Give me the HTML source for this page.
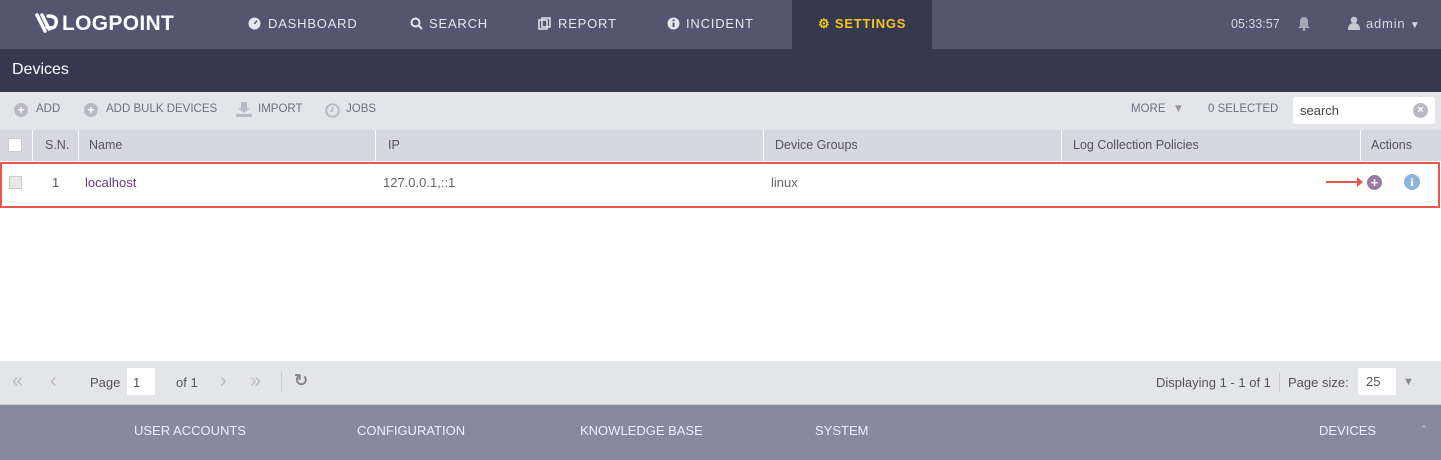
<!DOCTYPE html><html><head><style>
*{margin:0;padding:0;box-sizing:border-box}
body{width:1441px;height:460px;overflow:hidden;background:#fff;font-family:"Liberation Sans",sans-serif;position:relative}
.a{position:absolute}
.nav{left:0;top:0;width:1441px;height:49px;background:#54566f}
.nt{color:#e6e6ee;font-size:13px;letter-spacing:.8px;top:16px}
.tb{color:#6e7080;font-size:11.5px;top:103px}
.hd{color:#555;font-size:12.5px;top:138px}
.ic{border-radius:50%;background:#b8b9c2;color:#fff;font-size:12px;font-weight:bold;text-align:center;line-height:14px}
svg{position:absolute}
</style></head><body>
<div class="a nav"></div>
<div class="a" style="left:1182px;top:49px;width:259px;height:3px;background:#54566f"></div>
<div class="a" style="left:792px;top:0;width:140px;height:49px;background:#353950"></div>
<svg style="left:34px;top:12px" width="26" height="24" viewBox="0 0 26 24"><path d="M3 3 L11 19 M8 3 L15 17 M14 4 Q24 4 22 12 Q20 18 13 15" stroke="#fff" stroke-width="3.5" fill="none" stroke-linecap="round"/></svg>
<div class="a" style="left:62px;top:12px;color:#fff;font-size:21px;font-weight:bold;letter-spacing:.3px">LOGPOINT</div>
<svg style="left:248px;top:17px" width="13" height="13"><circle cx="6.5" cy="6.5" r="6" fill="#e6e6ee"/><path d="M6.5 7 L9 3.5" stroke="#54566f" stroke-width="1.5"/></svg>
<div class="a nt" style="left:268px">DASHBOARD</div>
<svg style="left:410px;top:17px" width="13" height="13"><circle cx="5.5" cy="5.5" r="4" stroke="#e6e6ee" stroke-width="2" fill="none"/><path d="M8.5 8.5 L12 12" stroke="#e6e6ee" stroke-width="2"/></svg>
<div class="a nt" style="left:429px">SEARCH</div>
<svg style="left:538px;top:17px" width="13" height="13"><rect x="1" y="3" width="8" height="9" stroke="#e6e6ee" stroke-width="1.5" fill="none"/><rect x="4" y="1" width="8" height="9" stroke="#e6e6ee" stroke-width="1.5" fill="none"/></svg>
<div class="a nt" style="left:558px">REPORT</div>
<svg style="left:667px;top:17px" width="13" height="13"><circle cx="6.5" cy="6.5" r="6" fill="#e6e6ee"/><path d="M6.5 5.5 V10" stroke="#54566f" stroke-width="2"/><circle cx="6.5" cy="3.3" r="1.1" fill="#54566f"/></svg>
<div class="a nt" style="left:686px">INCIDENT</div>
<div class="a nt" style="left:818px;color:#f5c518;font-weight:bold">&#9881; SETTINGS</div>
<div class="a nt" style="left:1231px;font-size:12.5px;letter-spacing:0;top:17px;color:#d6d6e0">05:33:57</div>
<svg style="left:1298px;top:16px" width="12" height="15"><path d="M6 1 Q10 1 10 6 V10 L12 12 H0 L2 10 V6 Q2 1 6 1Z" fill="#a8a9b8"/><circle cx="6" cy="13.5" r="1.5" fill="#a8a9b8"/></svg>
<svg style="left:1348px;top:16px" width="12" height="14"><circle cx="6" cy="4" r="3.3" fill="#c8c8d4"/><path d="M0 14 Q0 7 6 7 Q12 7 12 14Z" fill="#c8c8d4"/></svg>
<div class="a nt" style="left:1366px;color:#d6d6e0">admin <span style="font-size:10px">&#9660;</span></div>
<div class="a" style="left:0;top:49px;width:1441px;height:43px;background:#353950"></div>
<div class="a" style="left:12px;top:61px;color:#fff;font-size:16px">Devices</div>
<div class="a" style="left:0;top:92px;width:1441px;height:38px;background:#e4e5e9"></div>
<div class="a ic" style="left:14px;top:103px;width:14px;height:14px">+</div>
<div class="a tb" style="left:36px">ADD</div>
<div class="a ic" style="left:84px;top:103px;width:14px;height:14px">+</div>
<div class="a tb" style="left:106px">ADD BULK DEVICES</div>
<svg style="left:236px;top:102px" width="16" height="15"><path d="M5 0 H11 V6 H14 L8 11 L2 6 H5Z" fill="#b8b9c2"/><rect x="0" y="12" width="16" height="3" fill="#b8b9c2"/></svg>
<div class="a tb" style="left:258px">IMPORT</div>
<svg style="left:325px;top:103px" width="15" height="15"><circle cx="7.5" cy="7.5" r="6.3" stroke="#b8b9c2" stroke-width="2" fill="none"/><path d="M7.5 4 V8 H5" stroke="#b8b9c2" stroke-width="1.6" fill="none"/></svg>
<div class="a tb" style="left:346px">JOBS</div>
<div class="a tb" style="left:1131px">MORE <span style="color:#999;margin-left:4px">&#9660;</span></div>
<div class="a tb" style="left:1208px">0 SELECTED</div>
<div class="a" style="left:1293px;top:97px;width:142px;height:27px;background:#fff;border-radius:3px"></div>
<div class="a" style="left:1300px;top:103px;font-size:13px;color:#444">search</div>
<div class="a ic" style="left:1413px;top:103px;width:15px;height:15px;font-size:11px;line-height:15px">×</div>
<div class="a" style="left:0;top:130px;width:1441px;height:31px;background:#d6d7df"></div>
<div class="a" style="left:32px;top:130px;width:1px;height:31px;background:#fff"></div>
<div class="a" style="left:78px;top:130px;width:1px;height:31px;background:#fff"></div>
<div class="a" style="left:375px;top:130px;width:1px;height:31px;background:#fff"></div>
<div class="a" style="left:763px;top:130px;width:1px;height:31px;background:#fff"></div>
<div class="a" style="left:1061px;top:130px;width:1px;height:31px;background:#fff"></div>
<div class="a" style="left:1360px;top:130px;width:1px;height:31px;background:#fff"></div>
<div class="a" style="left:8px;top:138px;width:14px;height:14px;background:#fff;border:1px solid #ccc"></div>
<div class="a hd" style="left:45px">S.N.</div>
<div class="a hd" style="left:89px">Name</div>
<div class="a hd" style="left:388px">IP</div>
<div class="a hd" style="left:775px">Device Groups</div>
<div class="a hd" style="left:1073px">Log Collection Policies</div>
<div class="a hd" style="left:1371px">Actions</div>
<div class="a" style="left:0;top:162px;width:1440px;height:46px;border:2px solid #e8554e"></div>
<div class="a" style="left:9px;top:176px;width:13px;height:13px;background:#e8e8ec;border:1px solid #ccc"></div>
<div class="a" style="left:52px;top:175px;font-size:13px;color:#555">1</div>
<div class="a" style="left:85px;top:175px;font-size:13px;color:#6a3a7a">localhost</div>
<div class="a" style="left:383px;top:175px;font-size:13px;color:#666">127.0.0.1,::1</div>
<div class="a" style="left:771px;top:175px;font-size:13px;color:#666">linux</div>
<div class="a" style="left:1326px;top:181px;width:35px;height:2px;background:#e8554e"></div>
<div class="a" style="left:1357px;top:177px;border-left:6px solid #e8554e;border-top:5px solid transparent;border-bottom:5px solid transparent"></div>
<div class="a" style="left:1367px;top:175px;width:15px;height:15px;border-radius:50%;background:#9a7aa0;color:#fff;font-size:13px;font-weight:bold;text-align:center;line-height:15px">+</div>
<div class="a" style="left:1404px;top:174px;width:16px;height:16px;border-radius:50%;background:#8db4dc;color:#fff;font-size:12px;font-weight:bold;text-align:center;line-height:16px;font-family:'Liberation Serif',serif">i</div>
<div class="a" style="left:0;top:361px;width:1441px;height:43px;background:#e4e5e9"></div>
<div class="a" style="left:12px;top:370px;font-size:20px;color:#bbb">«</div>
<div class="a" style="left:50px;top:370px;font-size:20px;color:#bbb">‹</div>
<div class="a" style="left:90px;top:375px;font-size:13px;color:#555">Page</div>
<div class="a" style="left:127px;top:368px;width:28px;height:27px;background:#fff;font-size:13px;color:#555;padding:7px 0 0 6px">1</div>
<div class="a" style="left:176px;top:375px;font-size:13px;color:#555">of 1</div>
<div class="a" style="left:220px;top:370px;font-size:20px;color:#bbb">›</div>
<div class="a" style="left:250px;top:370px;font-size:20px;color:#bbb">»</div>
<div class="a" style="left:281px;top:372px;width:1px;height:20px;background:#ccc"></div>
<div class="a" style="left:294px;top:371px;font-size:17px;color:#888;font-weight:bold">&#x21BB;</div>
<div class="a" style="left:1156px;top:375px;font-size:13px;color:#555">Displaying 1 - 1 of 1</div>
<div class="a" style="left:1279px;top:372px;width:1px;height:20px;background:#ccc"></div>
<div class="a" style="left:1288px;top:375px;font-size:13px;color:#555">Page size:</div>
<div class="a" style="left:1358px;top:368px;width:38px;height:27px;background:#fff;font-size:13px;color:#555;padding:6px 0 0 8px">25</div>
<div class="a" style="left:1403px;top:376px;font-size:11px;color:#888">&#9660;</div>
<div class="a" style="left:0;top:404px;width:1441px;height:56px;background:#868a9e;border-top:1px solid #c8cad4"></div>
<div class="a" style="left:134px;top:423px;font-size:13px;color:#eef">USER ACCOUNTS</div>
<div class="a" style="left:357px;top:423px;font-size:13px;color:#eef">CONFIGURATION</div>
<div class="a" style="left:580px;top:423px;font-size:13px;color:#eef">KNOWLEDGE BASE</div>
<div class="a" style="left:815px;top:423px;font-size:13px;color:#eef">SYSTEM</div>
<div class="a" style="left:1319px;top:423px;font-size:13px;color:#eef">DEVICES</div>
<div class="a" style="left:1420px;top:424px;font-size:9px;color:#ccd">&#8963;</div>
</body></html>
